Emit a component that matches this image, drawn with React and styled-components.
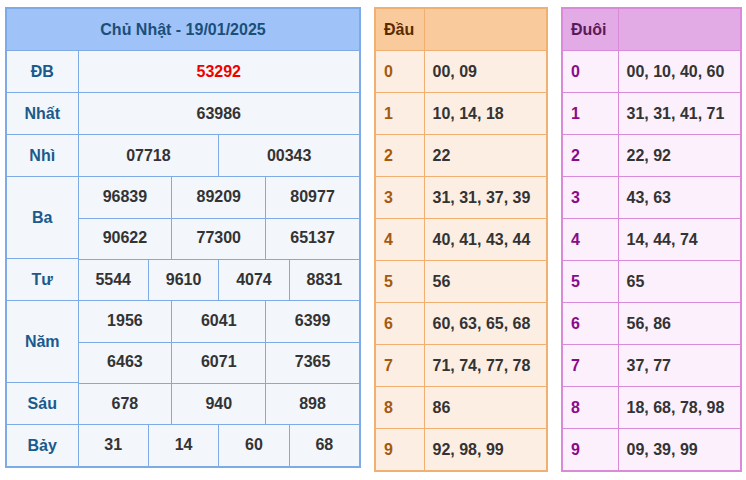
import React from "react";
import styled, { createGlobalStyle } from "styled-components";

const G = createGlobalStyle`
  body { margin: 0; background: #fff; font-family: "Liberation Sans", Arial, sans-serif; }
`;

const Wrap = styled.div`
  display: flex; align-items: flex-start; gap: 13px; padding: 7px 0 0 5px;
`;

const Table = styled.table`
  border-collapse: collapse;
  width: ${p => p.$w}px;
  table-layout: fixed;
  border: 2px solid ${p => p.$b};
  background: ${p => p.$bg};
  font-size: 16px; font-weight: bold; color: #333;
  td, th { border: 1px solid ${p => p.$b}; height: 41px; padding: 0; }
`;

const Head = styled.th`
  background: ${p => p.$bg}; color: ${p => p.$c}; font-size: 16px;
  text-align: ${p => p.$left ? "left" : "center"}; padding-left: ${p => p.$left ? "8px" : 0} !important;
`;

const Label = styled.td`
  color: #1a5a8c; text-align: center; width: 70px;
`;
const Num = styled.td`
  text-align: center; color: ${p => p.$red ? "#e00" : "#333"};
`;
const Digit = styled.td`
  color: ${p => p.$c}; padding-left: 8px !important;
`;
const Vals = styled.td`
  padding-left: 8px !important; color: #333;
`;

const rows = [
  ["ĐB", [["53292"]], true],
  ["Nhất", [["63986"]]],
  ["Nhì", [["07718", "00343"]]],
  ["Ba", [["96839", "89209", "80977"], ["90622", "77300", "65137"]]],
  ["Tư", [["5544", "9610", "4074", "8831"]]],
  ["Năm", [["1956", "6041", "6399"], ["6463", "6071", "7365"]]],
  ["Sáu", [["678", "940", "898"]]],
  ["Bảy", [["31", "14", "60", "68"]]],
];

const dau = ["00, 09", "10, 14, 18", "22", "31, 31, 37, 39", "40, 41, 43, 44", "56", "60, 63, 65, 68", "71, 74, 77, 78", "86", "92, 98, 99"];
const duoi = ["00, 10, 40, 60", "31, 31, 41, 71", "22, 92", "43, 63", "14, 44, 74", "65", "56, 86", "37, 77", "18, 68, 78, 98", "09, 39, 99"];

function Main() {
  const out = [];
  rows.forEach(([lab, lines, red]) => {
    lines.forEach((nums, li) => {
      out.push(
        <tr key={lab + li}>
          {li === 0 && <Label rowSpan={lines.length}>{lab}</Label>}
          <td style={{ padding: 0, border: "none" }}>
            <Inner>
              {nums.map((n, i) => <Cell key={i} $red={red}>{n}</Cell>)}
            </Inner>
          </td>
        </tr>
      );
    });
  });
  return (
    <Table $w={356} $b="#7eabe6" $bg="#f3f6fb">
      <colgroup><col style={{ width: 72 }} /><col /></colgroup>
      <thead><tr><Head colSpan={2} $bg="#9fc3f8" $c="#1a4f7a">Chủ Nhật - 19/01/2025</Head></tr></thead>
      <tbody>{out}</tbody>
    </Table>
  );
}

const Inner = styled.div`
  display: flex; height: 42px; margin-bottom: -1px;
`;
const Cell = styled.div`
  flex: 1; display: flex; align-items: center; justify-content: center;
  border-right: 1px solid #7eabe6; border-bottom: 1px solid #7eabe6;
  color: ${p => p.$red ? "#e00" : "#333"};
  &:last-child { border-right: none; }
`;

function Loto({ title, data, w, b, hbg, bg, hc, dc, first }) {
  return (
    <Table $w={w} $b={b} $bg={bg}>
      <colgroup><col style={{ width: first }} /><col /></colgroup>
      <thead><tr><Head $left $bg={hbg} $c={hc}>{title}</Head><Head $bg={hbg} /></tr></thead>
      <tbody>
        {data.map((v, i) => (
          <tr key={i}><Digit $c={dc}>{i}</Digit><Vals>{v}</Vals></tr>
        ))}
      </tbody>
    </Table>
  );
}

export default function App() {
  return (
    <Wrap>
      <G />
      <Main />
      <Loto title="Đầu" data={dau} w={174} b="#f0b072" hbg="#f9ca9c" bg="#fdeee3" hc="#5a2a00" dc="#a35a10" first={49} />
      <Loto title="Đuôi" data={duoi} w={181} b="#d98ad9" hbg="#e3abe6" bg="#fbf0fb" hc="#5a1a5a" dc="#8a0a8a" first={56} />
    </Wrap>
  );
}
